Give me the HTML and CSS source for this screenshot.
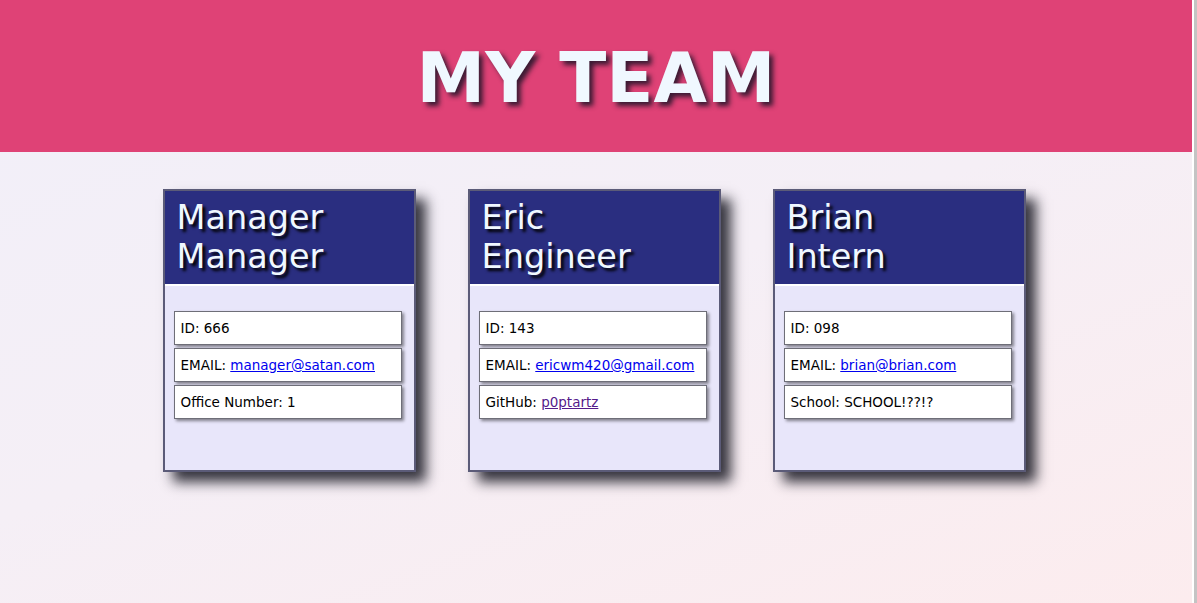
FILE: index.html
```html
<!DOCTYPE html>
<html lang="en">
<head>
<meta charset="utf-8">
<title>My Team</title>
<link rel="stylesheet" href="styles.css">
</head>
<body>
<div class="page">
  <header class="banner">
    <h1 class="banner-title">MY TEAM</h1>
  </header>
  <main class="team">
    <section class="card">
      <h2 class="card-head"><span>Manager</span><span>Manager</span></h2>
      <div class="card-body">
        <div class="item">ID: 666</div>
        <div class="item">EMAIL: <a class="link" href="#">manager@satan.com</a></div>
        <div class="item">Office Number: 1</div>
      </div>
    </section>
    <section class="card">
      <h2 class="card-head"><span>Eric</span><span>Engineer</span></h2>
      <div class="card-body">
        <div class="item">ID: 143</div>
        <div class="item">EMAIL: <a class="link" href="#">ericwm420@gmail.com</a></div>
        <div class="item">GitHub: <a class="link visited" href="#">p0ptartz</a></div>
      </div>
    </section>
    <section class="card">
      <h2 class="card-head"><span>Brian</span><span>Intern</span></h2>
      <div class="card-body">
        <div class="item">ID: 098</div>
        <div class="item">EMAIL: <a class="link" href="#">brian@brian.com</a></div>
        <div class="item">School: SCHOOL!??!?</div>
      </div>
    </section>
  </main>
</div>
</body>
</html>
```

FILE: styles.css
```css
html, body {
  margin: 0;
  height: 100%;
}
body {
  background: #ffffff;
  border-right: 3px solid #c4c4c4;
  box-sizing: border-box;
  font-family: "DejaVu Sans", "Liberation Sans", sans-serif;
}
.page {
  margin-right: 2px;
  min-height: 100%;
  background: linear-gradient(160deg, #f1eff9 0%, #f5eff6 50%, #fcecee 100%);
}
.banner {
  background: #df4276;
  height: 152px;
  display: flex;
  align-items: center;
  justify-content: center;
}
.banner-title {
  margin: 0;
  padding-top: 4px;
  font-size: 69px;
  font-weight: bold;
  letter-spacing: 0;
  color: #f0f8ff;
  text-shadow: 4px 4px 5px rgba(30, 20, 40, 0.85);
}
.team {
  display: flex;
  justify-content: center;
  gap: 52px;
  padding-top: 37px;
  padding-right: 4px;
}
.card {
  width: 249px;
  height: 279px;
  border: 2px solid #5b5b78;
  background: #e8e6fa;
  box-shadow: 10px 10px 12px rgba(20, 20, 30, 0.85);
  display: flex;
  flex-direction: column;
}
.card-head {
  margin: 0;
  height: 95px;
  box-sizing: border-box;
  padding: 7px 12px 0;
  background: #2a2e80;
  border-bottom: 2px solid #ffffff;
  color: #f0f8ff;
  font-size: 33.5px;
  font-weight: normal;
  line-height: 39px;
  text-shadow: 3px 3px 3px #000000;
  display: flex;
  flex-direction: column;
}
.card-body {
  padding: 25px 12px 0 9px;
  display: flex;
  flex-direction: column;
  gap: 3px;
}
.item {
  height: 34px;
  box-sizing: border-box;
  background: #ffffff;
  border: 1px solid #6e6e78;
  box-shadow: 2px 2px 3px rgba(0, 0, 0, 0.45);
  padding: 0 6px;
  display: flex;
  align-items: center;
  font-size: 13.5px;
  color: #000000;
  white-space: pre;
}
.link {
  color: #0000ee;
  text-decoration: underline;
}
.visited {
  color: #551a8b;
}
```
